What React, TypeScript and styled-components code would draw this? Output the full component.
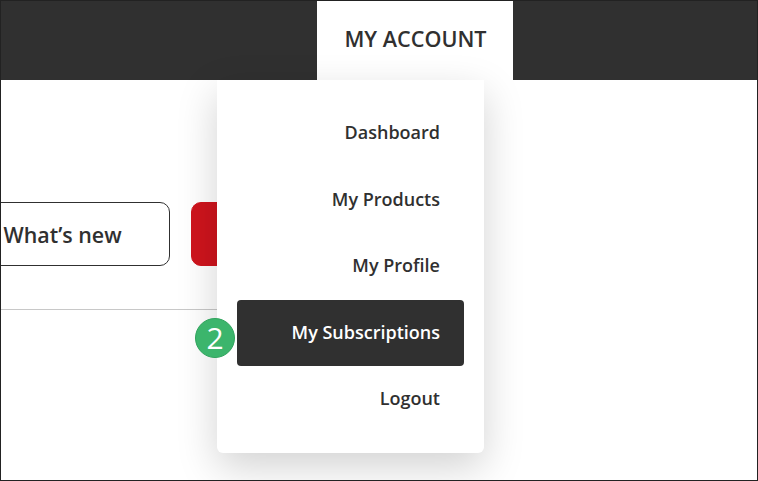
import React from "react";
import styled, { createGlobalStyle } from "styled-components";

const GlobalStyle = createGlobalStyle`
  html, body {
    margin: 0;
    padding: 0;
    background: #fff;
  }
  * {
    box-sizing: border-box;
  }
`;

const Frame = styled.div`
  position: relative;
  width: 758px;
  height: 481px;
  border: 1px solid #222;
  overflow: hidden;
  font-family: "Open Sans", "Lato", sans-serif;
  color: #303030;
`;

const Header = styled.header`
  height: 79px;
  background: #303030;
  display: flex;
  padding-left: 316px;
`;

const AccountTab = styled.div`
  width: 196px;
  background: #fff;
  display: flex;
  align-items: center;
  justify-content: center;
  padding: 0 0 4px 1px;
  font-size: 21.6px;
  font-weight: 600;
`;

const Content = styled.main`
  padding-top: 122px;
`;

const Actions = styled.div`
  display: flex;
  gap: 21px;
  width: 500px;
  margin-left: -30px;
  padding-bottom: 43px;
  border-bottom: 1px solid #c8c8c8;
`;

const ActionButton = styled.div<{ $primary?: boolean }>`
  width: ${(p) => (p.$primary ? "180px" : "199px")};
  height: 64px;
  border-radius: 10px;
  border: 1px solid ${(p) => (p.$primary ? "#cf141d" : "#303030")};
  background: ${(p) => (p.$primary ? "#cf141d" : "#fff")};
  display: flex;
  align-items: center;
  padding-left: 31.5px;
  font-size: 21.4px;
  font-weight: 600;
`;

const Menu = styled.nav`
  position: absolute;
  left: 216px;
  top: 79px;
  width: 267px;
  height: 373px;
  padding: 20px 20px 0;
  background: #fff;
  border-radius: 0 0 6px 6px;
  box-shadow: 0 14px 40px rgba(0, 0, 0, 0.18);
  display: flex;
  flex-direction: column;
`;

const MenuItem = styled.a<{ $active?: boolean }>`
  height: 66.5px;
  flex: none;
  display: flex;
  align-items: center;
  justify-content: flex-end;
  padding: 0 24px 2px 0;
  border-radius: 4px;
  font-size: 18px;
  font-weight: 600;
  background: ${(p) => (p.$active ? "#303030" : "transparent")};
  color: ${(p) => (p.$active ? "#fff" : "#303030")};
`;

const StepBadge = styled.div`
  position: absolute;
  left: 194px;
  top: 317px;
  width: 40px;
  height: 40px;
  border-radius: 50%;
  background: #3cb56c;
  border: 1px solid #2fa35c;
  color: #fff;
  display: flex;
  align-items: center;
  justify-content: center;
  padding-bottom: 2px;
  font-size: 30px;
  font-weight: 500;
`;

const items = ["Dashboard", "My Products", "My Profile", "My Subscriptions", "Logout"];

export default function App() {
  return (
    <>
      <GlobalStyle />
      <Frame>
        <Header>
          <AccountTab>MY ACCOUNT</AccountTab>
        </Header>
        <Content>
          <Actions>
            <ActionButton>What’s new</ActionButton>
            <ActionButton $primary />
          </Actions>
        </Content>
        <Menu>
          {items.map((item) => (
            <MenuItem key={item} $active={item === "My Subscriptions"}>
              {item}
            </MenuItem>
          ))}
        </Menu>
        <StepBadge>2</StepBadge>
      </Frame>
    </>
  );
}
